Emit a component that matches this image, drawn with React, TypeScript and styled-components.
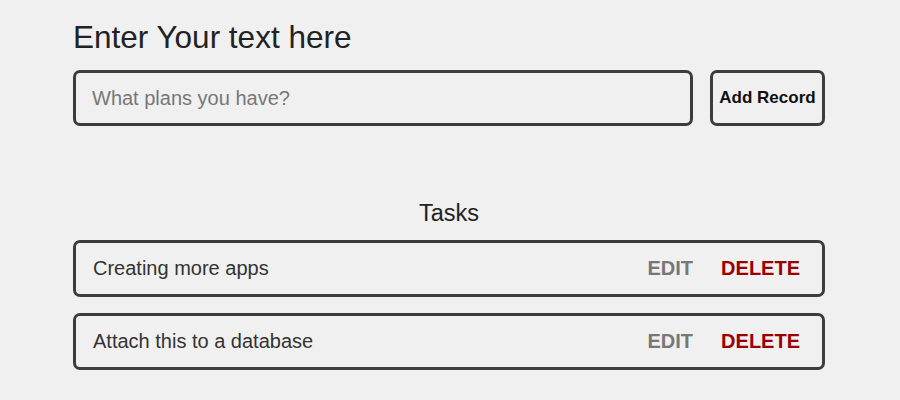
import React from "react";
import styled, { createGlobalStyle } from "styled-components";

const Global = createGlobalStyle`
  html, body { margin: 0; padding: 0; background: #f0f0f0; }
  body { font-family: "Liberation Sans", Arial, sans-serif; color: #222; }
`;

const Page = styled.div`
  width: 752px;
  margin: 0 0 0 73px;
  padding-top: 19px;
`;

const Title = styled.h1`
  margin: 0 0 15px;
  font-size: 31.5px;
  font-weight: 400;
  line-height: 36px;
  color: #222;
`;

const Form = styled.div`
  display: flex;
  gap: 17px;
  height: 56px;
`;

const Input = styled.input`
  flex: 1;
  box-sizing: border-box;
  height: 56px;
  border: 3px solid #3c3c3c;
  border-radius: 7px;
  background: #f0f0f0;
  padding: 0 16px;
  font-family: inherit;
  font-size: 20px;
  color: #222;
  outline: none;
  &::placeholder { color: #777; }
`;

const AddButton = styled.button`
  box-sizing: border-box;
  width: 115px;
  height: 56px;
  border: 3px solid #3c3c3c;
  border-radius: 7px;
  background: #f0f0f0;
  font-family: inherit;
  font-weight: 700;
  font-size: 17px;
  color: #111;
  padding: 0;
`;

const TasksTitle = styled.h2`
  margin: 73px 0 13px;
  text-align: center;
  font-size: 23.5px;
  font-weight: 400;
  line-height: 28px;
  color: #222;
`;

const List = styled.div`
  display: flex;
  flex-direction: column;
  gap: 16px;
`;

const Row = styled.div`
  box-sizing: border-box;
  height: 57px;
  border: 3px solid #3c3c3c;
  border-radius: 7px;
  display: flex;
  align-items: center;
  padding: 0 22px 0 17px;
`;

const TaskText = styled.span`
  flex: 1;
  font-size: 20px;
  color: #333;
`;

const Action = styled.button<{ $danger?: boolean }>`
  border: 0;
  background: none;
  padding: 0;
  margin-left: ${(p) => (p.$danger ? "28px" : "0")};
  font-family: inherit;
  font-weight: 700;
  font-size: 20px;
  color: ${(p) => (p.$danger ? "#9b0000" : "#777")};
`;

const tasks = ["Creating more apps", "Attach this to a database"];

export default function App() {
  return (
    <>
      <Global />
      <Page>
        <Title>Enter Your text here</Title>
        <Form>
          <Input placeholder="What plans you have?" />
          <AddButton>Add Record</AddButton>
        </Form>
        <TasksTitle>Tasks</TasksTitle>
        <List>
          {tasks.map((t) => (
            <Row key={t}>
              <TaskText>{t}</TaskText>
              <Action>EDIT</Action>
              <Action $danger>DELETE</Action>
            </Row>
          ))}
        </List>
      </Page>
    </>
  );
}
